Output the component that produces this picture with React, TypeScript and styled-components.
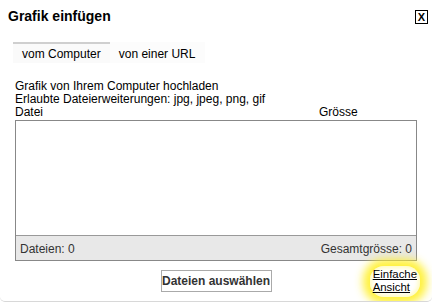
import React from 'react'
import styled, { createGlobalStyle } from 'styled-components'

const GlobalStyle = createGlobalStyle`
  html, body {
    margin: 0;
    padding: 0;
    background: #fff;
  }
  body {
    font-family: 'Liberation Sans', Arial, sans-serif;
    font-size: 12px;
    color: #000;
  }
`

const Dialog = styled.div`
  width: 432px;
  height: 302px;
  box-sizing: border-box;
  border-bottom: 1px solid #d8d8d8;
  border-radius: 0 0 5px 5px;
  display: flex;
  flex-direction: column;
  overflow: hidden;
`

const TitleBar = styled.div`
  display: flex;
  align-items: center;
  justify-content: space-between;
  padding: 7px 4px 0 8px;
  height: 18px;
`

const Title = styled.h1`
  margin: 0;
  font-size: 14px;
  font-weight: bold;
  line-height: 18px;
`

const CloseButton = styled.button`
  width: 13px;
  height: 14px;
  padding: 0;
  margin-top: 2px;
  border: 1px solid #000;
  background: #fff;
  font-family: 'Liberation Sans', Arial, sans-serif;
  font-size: 11px;
  font-weight: bold;
  line-height: 12px;
  color: #000;
  cursor: pointer;
`

const Tabs = styled.div`
  display: flex;
  margin: 17px 0 0 13px;
`

const Tab = styled.div<{ $active?: boolean }>`
  height: 19px;
  padding: 0 9px 0 9px;
  border-top: 2px solid ${(p) => (p.$active ? '#cfcfcf' : 'transparent')};
  background: ${(p) => (p.$active ? '#fafafa' : '#fcfcfc')};
  font-size: 12px;
  line-height: 20px;
  min-width: 77px;
`

const Body = styled.div`
  padding: 17px 15px 0 15px;
`

const Line = styled.div`
  line-height: 13px;
`

const HeaderRow = styled.div`
  display: flex;
  width: 402px;
  line-height: 13px;
`

const NameCol = styled.span`
  flex: 1;
`

const SizeCol = styled.span`
  width: 98px;
`

const ListBox = styled.div`
  width: 402px;
  height: 141px;
  margin-top: 1px;
  box-sizing: border-box;
  border: 1px solid #888;
  display: flex;
  flex-direction: column;
`

const FileArea = styled.div`
  flex: 1;
  background: #fff;
`

const StatusBar = styled.div`
  height: 25px;
  box-sizing: border-box;
  border-top: 1px solid #999;
  background: #e8e8e8;
  display: flex;
  align-items: center;
  justify-content: space-between;
  padding: 2px 4px 0 4px;
  color: #333;
`

const Actions = styled.div`
  display: grid;
  grid-template-columns: 1fr auto 1fr;
  align-items: start;
  margin-top: 3px;
`

const SelectButton = styled.button`
  grid-column: 2;
  margin-top: 6px;
  width: 111px;
  height: 22px;
  padding: 0;
  border: 1px solid #aaa;
  background: #fff;
  font-family: 'Liberation Sans', Arial, sans-serif;
  font-size: 12px;
  font-weight: bold;
  color: #333;
  cursor: pointer;
`

const LinkWrap = styled.div`
  grid-column: 3;
  justify-self: end;
  margin-right: 12px;
  margin-top: 2px;
  padding: 2px 3px 3px 3px;
  border-radius: 14px;
  box-shadow: 0 0 8px 7px rgba(255, 240, 40, 0.9),
    inset 0 0 4px 2px rgba(255, 248, 120, 0.5);
`

const SimpleLink = styled.a`
  display: block;
  color: #000;
  font-size: 11.4px;
  line-height: 13px;
  text-decoration: underline;
`

export default function App() {
  return (
    <>
      <GlobalStyle />
      <Dialog>
        <TitleBar>
          <Title>Grafik einfügen</Title>
          <CloseButton>X</CloseButton>
        </TitleBar>
        <Tabs>
          <Tab $active>vom Computer</Tab>
          <Tab>von einer URL</Tab>
        </Tabs>
        <Body>
          <Line>Grafik von Ihrem Computer hochladen</Line>
          <Line>Erlaubte Dateierweiterungen: jpg, jpeg, png, gif</Line>
          <HeaderRow>
            <NameCol>Datei</NameCol>
            <SizeCol>Grösse</SizeCol>
          </HeaderRow>
          <ListBox>
            <FileArea />
            <StatusBar>
              <span>Dateien: 0</span>
              <span>Gesamtgrösse: 0</span>
            </StatusBar>
          </ListBox>
        </Body>
        <Actions>
          <SelectButton>Dateien auswählen</SelectButton>
          <LinkWrap>
            <SimpleLink href="#">Einfache</SimpleLink>
            <SimpleLink href="#">Ansicht</SimpleLink>
          </LinkWrap>
        </Actions>
      </Dialog>
    </>
  )
}
